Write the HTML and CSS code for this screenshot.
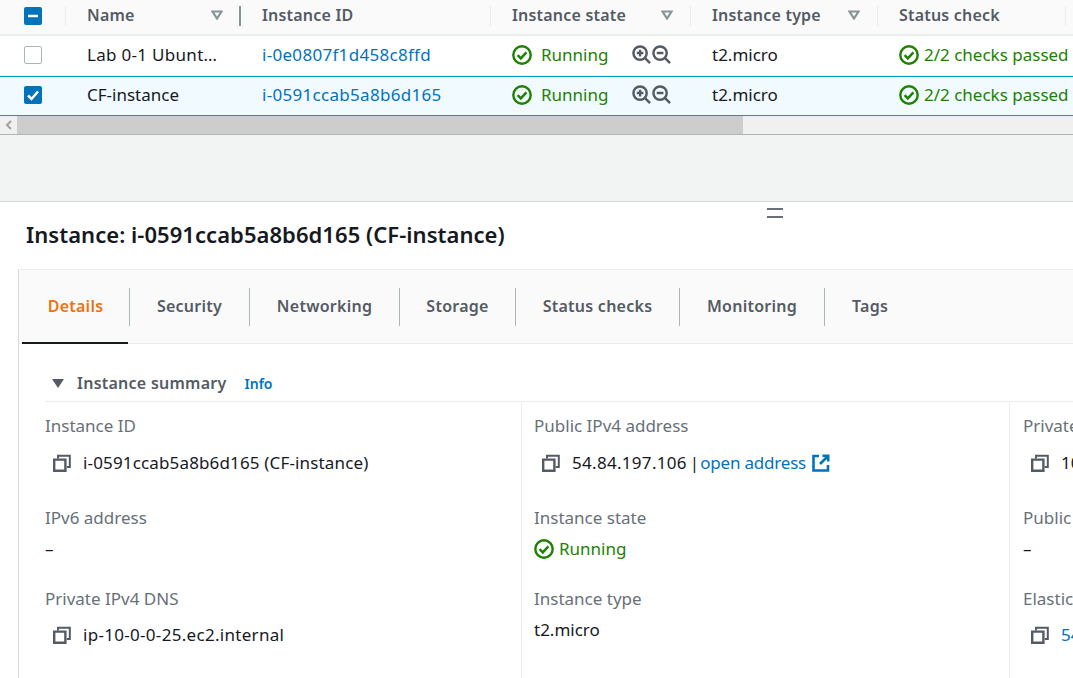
FILE: index.html
```html
<!DOCTYPE html>
<html>
<head>
    <meta charset="UTF-8">
    <title>Instances</title>
    <link rel="stylesheet" href="styles.css">
</head>
<body>
    <svg class="defs" width="0" height="0">
        <symbol id="check" viewBox="0 0 20 20">
            <circle cx="10" cy="10" r="8.7" fill="none" stroke="currentColor" stroke-width="2.400"/>
            <path d="M5.600 10.200l3.200 3.200 5.600-6" fill="none" stroke="currentColor" stroke-width="2.400"/>
        </symbol>
        <symbol id="copy" viewBox="0 0 18 18">
            <path d="M1.200 5.600h11.200v11.200H1.200z" fill="none" stroke="currentColor" stroke-width="2.400"/>
            <path d="M5 4.500V1.800h11.800V13h-3" fill="none" stroke="currentColor" stroke-width="2"/>
        </symbol>
        <symbol id="zoom-in" viewBox="0 0 20 20">
            <circle cx="8.500" cy="8.500" r="7" fill="none" stroke="currentColor" stroke-width="2.600"/>
            <path d="M13.500 13.500l5.500 5.500M5 8.500h7M8.500 5v7" fill="none" stroke="currentColor" stroke-width="2.600"/>
        </symbol>
        <symbol id="zoom-out" viewBox="0 0 20 20">
            <circle cx="8.500" cy="8.500" r="7" fill="none" stroke="currentColor" stroke-width="2.600"/>
            <path d="M13.500 13.500l5.500 5.500M5 8.500h7" fill="none" stroke="currentColor" stroke-width="2.600"/>
        </symbol>
        <symbol id="filter" viewBox="0 0 12 10">
            <path d="M1.500 1.500h9L6 8.500z" fill="none" stroke="currentColor" stroke-width="2.200"/>
        </symbol>
    </svg>

    <!-- instances table -->
    <div class="table">
        <div class="row head">
            <div class="cell cell-check">
                <span class="box box-on"><svg viewBox="0 0 18 18"><path d="M4 9h10" stroke="#fff" stroke-width="2.500"/></svg></span>
            </div>
            <div class="cell cell-name strong">Name<svg class="filter"><use href="#filter"/></svg></div>
            <div class="cell cell-id strong">Instance ID</div>
            <div class="cell cell-state strong">Instance state<svg class="filter"><use href="#filter"/></svg></div>
            <div class="cell cell-type strong">Instance type<svg class="filter"><use href="#filter"/></svg></div>
            <div class="cell cell-status strong">Status check</div>
        </div>
        <div class="row">
            <div class="cell cell-check"><span class="box"></span></div>
            <div class="cell cell-name wide">Lab 0-1 Ubunt…</div>
            <div class="cell cell-id wide"><a href="#">i-0e0807f1d458c8ffd</a></div>
            <div class="cell cell-state">
                <span class="ok"><svg class="ok-icon"><use href="#check"/></svg>Running</span>
                <span class="zooms"><svg><use href="#zoom-in"/></svg><svg><use href="#zoom-out"/></svg></span>
            </div>
            <div class="cell cell-type">t2.micro</div>
            <div class="cell cell-status"><span class="ok tight"><svg class="ok-icon"><use href="#check"/></svg>2/2 checks passed</span></div>
        </div>
        <div class="row selected">
            <div class="cell cell-check">
                <span class="box box-on"><svg viewBox="0 0 18 18"><path d="M4 9.500l3.500 3.500 6.500-7.500" fill="none" stroke="#fff" stroke-width="2.500"/></svg></span>
            </div>
            <div class="cell cell-name">CF-instance</div>
            <div class="cell cell-id wide"><a href="#">i-0591ccab5a8b6d165</a></div>
            <div class="cell cell-state">
                <span class="ok"><svg class="ok-icon"><use href="#check"/></svg>Running</span>
                <span class="zooms"><svg><use href="#zoom-in"/></svg><svg><use href="#zoom-out"/></svg></span>
            </div>
            <div class="cell cell-type">t2.micro</div>
            <div class="cell cell-status"><span class="ok tight"><svg class="ok-icon"><use href="#check"/></svg>2/2 checks passed</span></div>
        </div>
        <div class="scrollbar">
            <div class="scroll-left"><svg width="8" height="10" viewBox="0 0 8 10"><path d="M6 1L2 5l4 4" fill="none" stroke="#a3a3a3" stroke-width="2"/></svg></div>
            <div class="scroll-thumb"></div>
        </div>
    </div>

    <div class="gap"></div>

    <!-- split panel -->
    <div class="panel">
        <div class="drag-handle"></div>
        <h2 class="panel-title">Instance: i-0591ccab5a8b6d165 (CF-instance)</h2>
        <div class="card">
            <div class="tabs">
                <div class="tab tab-active">Details</div>
                <div class="tab">Security</div>
                <div class="tab">Networking</div>
                <div class="tab">Storage</div>
                <div class="tab">Status checks</div>
                <div class="tab">Monitoring</div>
                <div class="tab tab-last">Tags</div>
            </div>
            <div class="summary">
                <div class="summary-head">
                    <span class="caret"></span>
                    <span class="summary-title">Instance summary</span>
                    <a class="info" href="#">Info</a>
                </div>
                <div class="columns">
                    <div class="col col-first">
                        <div class="field field-tall">
                            <div class="label">Instance ID</div>
                            <div class="value copy id-value"><svg class="copy-icon"><use href="#copy"/></svg>i-0591ccab5a8b6d165 (CF-instance)</div>
                        </div>
                        <div class="field">
                            <div class="label">IPv6 address</div>
                            <div class="value plain">–</div>
                        </div>
                        <div class="field">
                            <div class="label">Private IPv4 DNS</div>
                            <div class="value copy wide"><svg class="copy-icon"><use href="#copy"/></svg>ip-10-0-0-25.ec2.internal</div>
                        </div>
                    </div>
                    <div class="col">
                        <div class="field field-tall">
                            <div class="label">Public IPv4 address</div>
                            <div class="value copy"><svg class="copy-icon"><use href="#copy"/></svg><span class="wide">54.84.197.106</span><span class="pipe">|</span><a class="open-link" href="#">open address</a>
                                <svg class="ext-icon" viewBox="0 0 18 18"><path d="M7 2H1.500v14.500H16V11" fill="none" stroke="currentColor" stroke-width="2.600"/><path d="M8 10l7.500-7.500M10.500 1.800H16.200V7.500" fill="none" stroke="currentColor" stroke-width="2.600"/></svg>
                            </div>
                        </div>
                        <div class="field">
                            <div class="label">Instance state</div>
                            <div class="value plain"><span class="ok tight"><svg class="ok-icon"><use href="#check"/></svg>Running</span></div>
                        </div>
                        <div class="field">
                            <div class="label">Instance type</div>
                            <div class="value plain">t2.micro</div>
                        </div>
                    </div>
                    <div class="col col-last">
                        <div class="field field-tall">
                            <div class="label">Private IPv4 addresses</div>
                            <div class="value copy"><svg class="copy-icon"><use href="#copy"/></svg>10.0.0.25</div>
                        </div>
                        <div class="field">
                            <div class="label">Public IPv4 DNS</div>
                            <div class="value plain">–</div>
                        </div>
                        <div class="field">
                            <div class="label">Elastic IP addresses</div>
                            <div class="value copy"><svg class="copy-icon"><use href="#copy"/></svg><a href="#">54.84.197.106</a></div>
                        </div>
                    </div>
                </div>
            </div>
        </div>
    </div>
</body>
</html>
```

FILE: styles.css
```css
/* EC2 console, instance list with details panel */
html, body {
    margin: 0;
    padding: 0;
    height: 678px;
    overflow: hidden;
}
body {
    font-family: "Noto Sans", Arial, sans-serif;
    font-size: 17px;
    color: #16191f;
    background-color: #fff;
}
a {
    color: #0073bb;
    text-decoration: none;
}
.defs {
    display: block;
    height: 0;
}
.wide {
    letter-spacing: 0.3px;
}

/* table */
.table {
    width: 1073px;
}
.row {
    display: flex;
    height: 39px;
    border-bottom: 1px solid #eaeded;
}
.row.head {
    height: 34px;
    background-color: #fafafa;
    border-bottom: 2px solid #eaeded;
    color: #545b64;
    font-size: 16px;
    letter-spacing: 0.2px;
}
.row.selected {
    background-color: #f1faff;
    border-top: 1px solid #00a1c9;
    border-bottom: 1px solid #00a1c9;
    height: 38px;
}
.cell {
    display: flex;
    align-items: center;
    box-sizing: border-box;
    padding-left: 21px;
    padding-bottom: 2px;
    white-space: nowrap;
    flex: none;
}
.selected .cell {
    padding-bottom: 3px;
}
.selected .cell-check {
    padding-bottom: 2px;
}
.head .cell {
    height: 20px;
    margin-top: 6px;
    padding-bottom: 3px;
    border-right: 1px solid #eaeded;
}
.head .cell-check {
    padding-bottom: 1px;
}
.strong {
    font-weight: 600;
}
.cell-check { width: 66px; padding-left: 24px; }
.cell-name { width: 175px; }
.cell-id { width: 250px; }
.cell-state { width: 200px; }
.cell-type { width: 187px; }
.cell-status { width: 188px; }
.head .cell-name {
    border-right: 2px solid #879596;
    padding-right: 16px;
    justify-content: space-between;
}
.head .cell-state, .head .cell-type {
    padding-right: 17px;
    justify-content: space-between;
}
.box {
    display: block;
    box-sizing: border-box;
    width: 18px;
    height: 18px;
    border: 1px solid #aab7b8;
    border-radius: 2px;
    background-color: #fff;
}
.box-on {
    border: none;
    background-color: #0073bb;
}
.box svg {
    display: block;
    width: 18px;
    height: 18px;
}
.filter {
    width: 12px;
    height: 10px;
    color: #879596;
}
.ok {
    display: inline-flex;
    align-items: center;
    gap: 9px;
    color: #1d8102;
}
.ok.tight {
    gap: 5px;
}
.ok-icon {
    width: 20px;
    height: 20px;
    flex: none;
}
.zooms {
    display: flex;
    gap: 1px;
    margin-left: 24px;
    color: #545b64;
}
.zooms svg {
    width: 19px;
    height: 19px;
}
.scrollbar {
    display: flex;
    height: 18px;
    background-color: #f0f0f0;
    border-bottom: 1px solid #aab7b8;
}
.scroll-left {
    display: flex;
    align-items: center;
    justify-content: center;
    width: 17px;
}
.scroll-thumb {
    width: 726px;
    background-color: #cdcdcd;
}

.gap {
    height: 66px;
    background-color: #f2f3f3;
}

/* details panel */
.panel {
    position: relative;
    border-top: 1px solid #d5dbdb;
    height: 476px;
    overflow: hidden;
}
.drag-handle {
    position: absolute;
    left: 767px;
    top: 6px;
    width: 16px;
    height: 10px;
    border-top: 2px solid #687078;
    border-bottom: 2px solid #687078;
    box-sizing: border-box;
}
.panel-title {
    margin: 0;
    padding: 18px 0 0 26px;
    height: 49px;
    font-size: 22px;
    line-height: 28px;
    font-weight: 600;
    letter-spacing: 0.05px;
}
.card {
    margin-left: 18px;
    width: 1100px;
    height: 410px;
    border-top: 1px solid #eaeded;
    border-left: 1px solid #d5dbdb;
}
.tabs {
    display: flex;
    align-items: center;
    height: 74px;
    padding-left: 3px;
    background-color: #fafafa;
    border-bottom: 1px solid #eaeded;
    font-size: 16px;
    font-weight: 600;
    letter-spacing: 0.25px;
    color: #545b64;
    box-sizing: border-box;
}
.tab {
    display: flex;
    align-items: center;
    justify-content: center;
    height: 38px;
    padding-bottom: 2px;
    box-sizing: border-box;
    border-right: 1px solid #aab7b8;
    white-space: nowrap;
    flex: none;
}
.tab:nth-child(1) { width: 108px; }
.tab:nth-child(2) { width: 120px; }
.tab:nth-child(3) { width: 150px; }
.tab:nth-child(4) { width: 116px; }
.tab:nth-child(5) { width: 164px; }
.tab:nth-child(6) { width: 145px; }
.tab-last { border-right: none; width: 90px; }
.tab-active {
    position: relative;
    color: #ec7211;
}
.tab-active::after {
    content: "";
    position: absolute;
    left: 0;
    right: 1px;
    bottom: -18px;
    height: 2px;
    background-color: #16191f;
}
.summary {
    padding-left: 26px;
}
.summary-head {
    display: flex;
    align-items: center;
    height: 58px;
    padding: 21px 0 0 7px;
    box-sizing: border-box;
    border-bottom: 1px solid #eaeded;
    font-size: 16px;
}
.caret {
    width: 0;
    height: 0;
    border-left: 6.500px solid transparent;
    border-right: 6.500px solid transparent;
    border-top: 9px solid #545b64;
    margin-right: 13px;
}
.summary-title {
    font-weight: 600;
    color: #545b64;
    letter-spacing: 0.25px;
}
.info {
    margin-left: 18px;
    font-size: 14px;
    font-weight: 600;
}
.columns {
    display: flex;
}
.col {
    width: 488px;
    min-height: 280px;
    box-sizing: border-box;
    padding-left: 12px;
    border-left: 1px solid #eaeded;
    white-space: nowrap;
    flex: none;
}
.col-first {
    width: 476px;
    padding-left: 0;
    border-left: none;
}
.col-last {
    padding-left: 13px;
}
.field {
    height: 81px;
}
.field-tall {
    height: 104px;
    padding-top: 12px;
    box-sizing: border-box;
}
.label {
    height: 24px;
    line-height: 24px;
    color: #687078;
}
.value {
    line-height: 24px;
}
.value.copy {
    display: flex;
    align-items: center;
    margin-top: 12px;
    padding-left: 8px;
}
.field-tall .value.copy {
    margin-top: 13px;
}
.value.plain {
    margin-top: 7px;
}
.id-value {
    letter-spacing: 0.15px;
}
.copy-icon {
    width: 18px;
    height: 18px;
    margin-right: 12px;
    color: #545b64;
    flex: none;
}
.pipe {
    color: #16191f;
    margin-left: 3px;
}
.open-link {
    margin-left: 1px;
    letter-spacing: -0.2px;
}
.ext-icon {
    width: 18px;
    height: 18px;
    margin-left: 6px;
    color: #0073bb;
}
```
